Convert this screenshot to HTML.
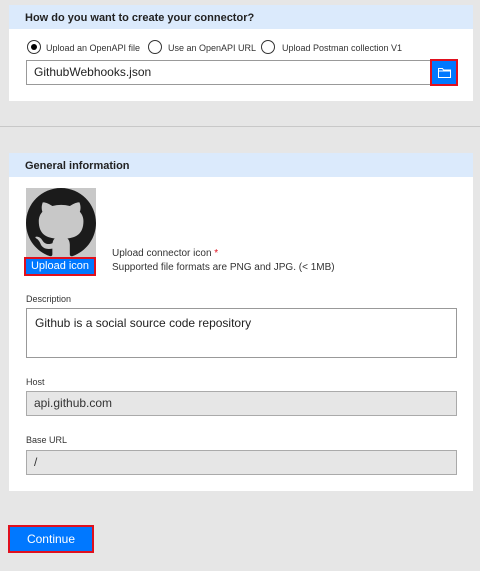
<!DOCTYPE html><html><head><style>
*{box-sizing:border-box;margin:0;padding:0}
body{width:480px;height:571px;background:#e6e6e6;font-family:"Liberation Sans",sans-serif;position:relative;overflow:hidden;color:#222}
.a{position:absolute}
.panel{background:#fff;left:9px;width:464px}
.hdr{background:#dbeafc;left:0;top:0;width:464px;height:24px;font-size:11px;font-weight:bold;padding:7px 0 0 16px;color:#222}
.rad{width:14px;height:14px;border:1px solid #333;border-radius:50%;background:#fff}
.lbl{font-size:10px;color:#333}
.rl{font-size:9px;color:#333}
.inp{border:1px solid #999;background:#fff;font-size:12px;padding-left:7px}
.gray{background:#e6e6e6;border:1px solid #aaa;font-size:12px;color:#333;padding-left:7px}
</style></head><body>
<div class="a panel" style="top:5px;height:96px">
 <div class="a hdr">How do you want to create your connector?</div>
</div>
<div class="a rad" style="left:27px;top:40px"><div class="a" style="left:3px;top:3px;width:6px;height:6px;border-radius:50%;background:#000"></div></div>
<div class="a rl" style="left:46px;top:43px">Upload an OpenAPI file</div>
<div class="a rad" style="left:148px;top:40px"></div>
<div class="a rl" style="left:168px;top:43px">Use an OpenAPI URL</div>
<div class="a rad" style="left:261px;top:40px"></div>
<div class="a rl" style="left:282px;top:43px">Upload Postman collection V1</div>
<div class="a inp" style="left:26px;top:60px;width:405px;height:25px;line-height:23px">GithubWebhooks.json</div>
<div class="a" style="left:430px;top:59px;width:28px;height:27px;background:#0078ff;border:2px solid #e0101e">
<svg class="a" style="left:6px;top:7px" width="13" height="10" viewBox="0 0 13 10"><path d="M0.5 0.5h4l1 1.5h7v7.5h-12z M0.5 3h12" fill="none" stroke="#fff" stroke-width="1"/></svg></div>
<div class="a" style="left:0;top:126px;width:480px;height:1px;background:#c8c8c8"></div>
<div class="a panel" style="top:153px;height:338px">
 <div class="a hdr">General information</div>
</div>
<div class="a" style="left:26px;top:188px;width:70px;height:70px;background:#c8c8c8;overflow:hidden">
<svg width="70" height="70" viewBox="0.5 0.5 15 15" style="position:absolute;left:0;top:0"><path fill="#1b1b1b" d="M8 0.5C3.86 0.5.5 3.86.5 8c0 3.31 2.15 6.12 5.13 7.11.38.07.52-.16.52-.36v-1.27c-2.09.45-2.530-1.01-2.53-1.01-.34-.87-.83-1.1-.83-1.1-.68-.47.05-.46.05-.46.75.05 1.15.78 1.15.78.67 1.15 1.76.82 2.19.62.07-.49.26-.82.48-1-1.67-.19-3.42-.83-3.42-3.71 0-.82.29-1.490.78-2.02-.08-.19-.34-.95.07-1.99 0 0 .63-.2 2.06.77a7.1 7.1 0 013.75 0c1.43-.97 2.06-.77 2.06-.77.41 1.04.15 1.8.07 1.99.48.53.78 1.2.78 2.02 0 2.89-1.76 3.52-3.43 3.71.27.23.51.69.51 1.39v2.06c0 .2.14.43.52.36C13.35 14.12 15.5 11.31 15.5 8 15.5 3.86 12.14.5 8 .5z"/></svg></div>
<div class="a" style="left:24px;top:257px;width:72px;height:19px;background:#0078ff;border:2px solid #e0101e;color:#fff;font-size:11px;text-align:center;line-height:15px">Upload icon</div>
<div class="a lbl" style="left:112px;top:248px">Upload connector icon <span style="color:#e0101e">*</span></div>
<div class="a lbl" style="left:112px;top:262px">Supported file formats are PNG and JPG. (&lt; 1MB)</div>
<div class="a" style="left:26px;top:294px;font-size:9px;color:#333">Description</div>
<div class="a inp" style="left:26px;top:308px;width:431px;height:50px;padding:7px 0 0 8px">Github is a social source code repository</div>
<div class="a" style="left:26px;top:377px;font-size:9px;color:#333">Host</div>
<div class="a gray" style="left:26px;top:391px;width:431px;height:25px;line-height:23px">api.github.com</div>
<div class="a" style="left:26px;top:435px;font-size:9px;color:#333">Base URL</div>
<div class="a gray" style="left:26px;top:450px;width:431px;height:25px;line-height:23px">/</div>
<div class="a" style="left:8px;top:525px;width:86px;height:28px;background:#0078ff;border:2px solid #e0101e;color:#fff;font-size:12px;text-align:center;line-height:25px">Continue</div>
</body></html>
